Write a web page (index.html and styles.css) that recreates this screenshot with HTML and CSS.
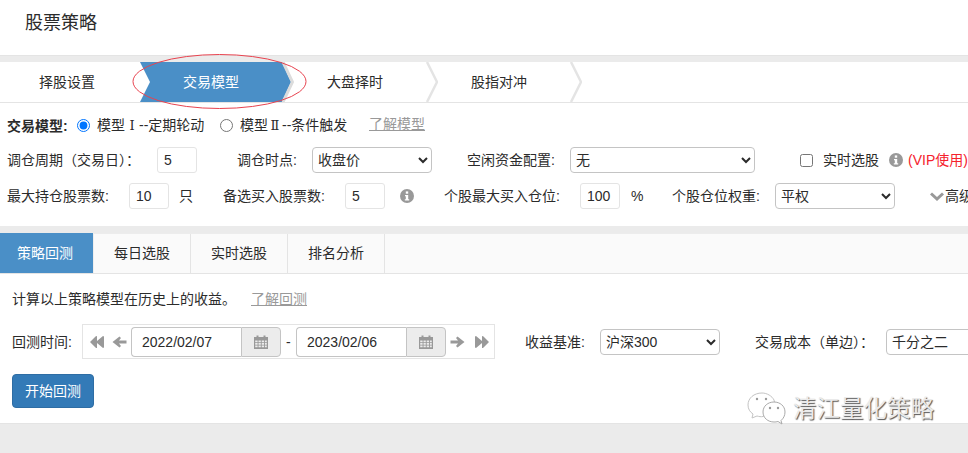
FILE: index.html
```html
<!DOCTYPE html>
<html lang="zh-CN">
<head>
<meta charset="utf-8">
<title>股票策略</title>
<link rel="stylesheet" href="styles.css">
</head>
<body>
<svg class="defs" width="0" height="0">
  <symbol id="info" viewBox="0 0 14 14"><circle cx="7" cy="7" r="7" fill="#999"/><rect x="5.8" y="2.4" width="2.4" height="2.3" fill="#fff"/><path d="M5 6h3.2v4.2H9.2v1.300H4.800v-1.300h1V7.200H5z" fill="#fff"/></symbol>
  <symbol id="back2" viewBox="0 0 14 14"><path d="M7 1v5L13 1q1 0 1 1v10q0 1-1 1L7 8v5q-1 0-1.500-.5L0 7l5.500-5.500Q6 1 7 1z" fill="#999"/></symbol>
  <symbol id="fwd2" viewBox="0 0 14 14"><path d="M7 1v5L1 1q-1 0-1 1v10q0 1 1 1l6-5v5q1 0 1.500-.5L14 7 8.500 1.500Q8 1 7 1z" fill="#999"/></symbol>
  <symbol id="left" viewBox="0 0 14 14"><path d="M7 1.500l1.500 1.500-2 2.500H14v3H6.500l2 2.500L7 12.500 0 7z" fill="#999"/></symbol>
  <symbol id="right" viewBox="0 0 14 14"><path d="M7 1.500L5.500 3l2 2.500H0v3h7.500l-2 2.500L7 12.500 14 7z" fill="#999"/></symbol>
  <symbol id="cal" viewBox="0 0 14 14"><path fill="#999" d="M0 2h2.500V.5h2V2h5V.5h2V2H14v12H0z"/><path fill="#ececec" d="M1.200 5.500h2.400v1.700H1.200zm3.300 0h2.300v1.700H4.500zm3.200 0H10v1.700H7.700zm3.200 0h1.900v1.700h-1.900zM1.200 8h2.400v1.700H1.200zm3.300 0h2.300v1.700H4.500zm3.200 0H10v1.700H7.700zm3.200 0h1.900v1.700h-1.900zM1.200 10.500h2.400v1.700H1.200zm3.300 0h2.300v1.700H4.500zm3.200 0H10v1.700H7.700zm3.200 0h1.900v1.700h-1.900z"/></symbol>
</svg>

<header class="page-title">股票策略</header>
<div class="band"></div>

<nav class="steps">
  <div class="step"><span>择股设置</span></div>
  <div class="step step-active"><svg class="arrow" width="154" height="40" viewBox="0 0 154 40"><path d="M0 0H142l9 20-9 20H0l10-20z" fill="#4a8fc7"/><path d="M143 0l9.500 20L143 40" fill="none" stroke="#dcdcdc" stroke-width="3"/></svg><span>交易模型</span></div>
  <div class="step"><span>大盘择时</span><svg class="chev" width="12" height="40" viewBox="0 0 12 40"><path d="M1 0l10 20L1 40" fill="none" stroke="#e4e4e4" stroke-width="2.500"/></svg></div>
  <div class="step"><span>股指对冲</span><svg class="chev" width="12" height="40" viewBox="0 0 12 40"><path d="M1 0l10 20L1 40" fill="none" stroke="#e4e4e4" stroke-width="2.500"/></svg></div>
</nav>

<section class="config">
  <div class="row row-model">
    <strong class="w-model">交易模型:</strong>
    <label class="radio radio-a"><input type="radio" name="model" checked><span>模型<span class="roman">Ⅰ</span>--定期轮动</span></label>
    <label class="radio radio-b"><input type="radio" name="model"><span>模型<span class="roman">Ⅱ</span>--条件触发</span></label>
    <a class="link link-model">了解模型</a>
  </div>
  <div class="row row-form">
    <span class="w-a">调仓周期（交易日）：</span>
    <input class="num" value="5">
    <span class="w-b">调仓时点:</span>
    <select class="sel sel-s"><option>收盘价</option></select>
    <span class="w-c">空闲资金配置:</span>
    <select class="sel sel-l"><option>无</option></select>
    <input class="check" type="checkbox">
    <span>实时选股</span>
    <svg class="ico ico-vip" width="14" height="14"><use href="#info"/></svg>
    <span class="vip">(VIP使用)</span>
  </div>
  <div class="row row-form row-3">
    <span class="w-d">最大持仓股票数:</span>
    <input class="num" value="10">
    <span class="unit">只</span>
    <span class="w-e">备选买入股票数:</span>
    <input class="num" value="5">
    <svg class="ico ico-buy" width="14" height="14"><use href="#info"/></svg>
    <span class="w-f">个股最大买入仓位:</span>
    <input class="num" value="100">
    <span class="unit unit-pct">%</span>
    <span class="w-g">个股仓位权重:</span>
    <select class="sel sel-s"><option>平权</option></select>
    <svg class="more-ico" width="14" height="10" viewBox="0 0 14 10"><path d="M2 1.500l5 4.500 5-4.500 2 2-7 6.500-7-6.500z" fill="#999"/></svg>
    <span>高级</span>
  </div>
</section>

<div class="band band-2"></div>

<nav class="tabs">
  <a class="tab tab-active">策略回测</a>
  <a class="tab">每日选股</a>
  <a class="tab">实时选股</a>
  <a class="tab">排名分析</a>
</nav>

<section class="panel">
  <p class="intro">计算以上策略模型在历史上的收益。<a class="link link-back">了解回测</a></p>
  <div class="row row-date">
    <span class="w-h">回测时间:</span>
    <div class="range">
      <svg class="nav-ico n1" width="16" height="14"><use href="#back2"/></svg>
      <svg class="nav-ico n2" width="15" height="14"><use href="#left"/></svg>
      <div class="date"><input class="date-in" value="2022/02/07"><span class="addon"><svg width="14" height="14"><use href="#cal"/></svg></span></div>
      <span class="dash">-</span>
      <div class="date"><input class="date-in" value="2023/02/06"><span class="addon"><svg width="14" height="14"><use href="#cal"/></svg></span></div>
      <svg class="nav-ico n3" width="15" height="14"><use href="#right"/></svg>
      <svg class="nav-ico n4" width="16" height="14"><use href="#fwd2"/></svg>
    </div>
    <span class="w-i">收益基准:</span>
    <select class="sel sel-s"><option>沪深300</option></select>
    <span class="w-j">交易成本（单边）：</span>
    <select class="sel sel-s"><option>千分之二</option></select>
  </div>
  <button class="start">开始回测</button>
</section>
<footer class="foot"></footer>

<svg class="ellipse" width="176" height="58" viewBox="0 0 176 58"><ellipse cx="87.500" cy="28.500" rx="86.500" ry="27" fill="none" stroke="#e8434f" stroke-width="1"/></svg>
<div class="mark">
  <svg width="40" height="34" viewBox="0 0 40 34"><g fill="#fff" stroke="#c4c4c4" stroke-width="1"><path d="M15 1C7 1 1 6 1 13c0 4 2 7 5 9l-1 4 5-2c2 .5 4 1 6 .5C20 22 30 14 27 8c-2-4-7-7-12-7z"/><path d="M27 10c-6 0-11 4-11 10s5 10 11 10c1.500 0 2.500 0 4-.5l4 2.500-1-3.500c2.500-2 4-5 4-8.500 0-6-5-10-11-10z" stroke="#aaa"/></g><g fill="#999"><circle cx="10" cy="7" r="1.200"/><circle cx="19" cy="7" r="1.200"/><circle cx="23" cy="16" r="1.200"/><circle cx="31" cy="16" r="1.200"/></g></svg>
  <span>清江量化策略</span>
</div>
</body>
</html>
```
FILE: styles.css
```css
* { box-sizing: border-box; }
html, body { margin: 0; height: 453px; overflow: hidden; }
body {
  position: relative;
  width: 968px;
  background: #fff;
  color: #2b2b2b;
  font: 14px/20px "Liberation Sans", "Noto Sans CJK SC", sans-serif;
}
.defs { position: absolute; }
.page-title { height: 55px; padding: 13px 0 0 25px; font-size: 18px; line-height: 20px; }
.band { height: 7px; background: #ebebeb; border-top: 1px solid #e4e4e4; }
.band-2 { border-top: 0; }

.steps { display: flex; height: 41px; margin-left: -5px; border-bottom: 1px solid #e4e4e4; width: 973px; }
.step { position: relative; flex: none; width: 144px; display: flex; align-items: center; justify-content: center; }
.step span { position: relative; }
.step-active { color: #fff; }
.arrow { position: absolute; left: 1px; top: 0; }
.chev { position: absolute; right: -11px; top: 0; }

.config { height: 123px; padding: 0 0 0 7px; }
.row { display: flex; align-items: center; white-space: nowrap; }
.row > * { flex: none; }
.row-model { height: 45px; }
.w-model { width: 70px; }
.radio { display: flex; align-items: center; }
.radio input { margin: 0 7px 0 0; width: 13px; height: 13px; }
.roman { display: inline-block; width: 14px; text-align: center; font-family: "DejaVu Serif", serif; font-size: 13px; }
.radio-a { width: 143px; }
.radio-b { width: 149px; }
.link { color: #999; text-decoration: underline; }
.link-model { position: relative; top: -2px; }

.row-form { height: 26px; margin-top: -1px; }
.row-3 { margin-top: 10px; }
.num { width: 40px; height: 26px; padding: 0 5px 0 6px; border: 1px solid #e4e4e4; border-radius: 3px; font: inherit; color: inherit; outline: 0; }
.sel { height: 26px; width: 120px; border: 1px solid #c4c4c4; border-radius: 4px; background: #fff; font: inherit; color: inherit; padding: 0 0 0 1px; }
.sel-l { width: 185px; }
.w-a { width: 150px; }
.w-b { margin-left: 40px; width: 75px; }
.w-c { margin-left: 35px; width: 103px; }
.check { margin: 0 10px 0 45px; width: 13px; height: 13px; }
.ico-vip { margin: 0 5px 0 10px; }
.vip { color: #f5222d; }
.w-d { width: 122px; }
.unit { margin-left: 10px; width: 14px; }
.w-e { margin-left: 30px; width: 122px; }
.ico-buy { margin-left: 15px; }
.w-f { margin-left: 30px; width: 136px; }
.unit-pct { margin-left: 11px; width: 12px; }
.w-g { margin-left: 29px; width: 103px; }
.more-ico { margin-left: 35px; margin-right: 1px; }

.tabs { display: flex; height: 41px; background: #fafafa; border-top: 1px solid #ececec; border-bottom: 1px solid #e4e4e4; }
.tab { height: 39px; padding: 9px 20px 0; width: 97px; text-align: center; border-right: 1px solid #e4e4e4; }
.tab-active { width: 94px; padding-left: 17px; padding-right: 20px; margin-top: -1px; height: 40px; padding-top: 10px; background: #4a8fc7; color: #fff; border-right: 1px solid #eee; }

.panel { height: 149px; padding: 0 0 0 12px; }
.intro { margin: 0; padding-top: 15px; height: 50px; }
.link-back { margin-left: 15px; }
.row-date { height: 35px; }
.w-h { width: 70px; }
.range { display: flex; align-items: center; width: 413px; height: 35px; border: 1px solid #e4e4e4; }
.n1 { margin-left: 6px; }
.n2 { margin-left: 7px; margin-right: 4px; }
.nav-ico { flex: none; }
.date { flex: none; display: flex; width: 150px; height: 30px; }
.date-in { width: 110px; height: 30px; padding: 0 10px; border: 1px solid #c4c4c4; border-right: 0; border-radius: 4px 0 0 4px; font: inherit; color: inherit; outline: 0; }
.addon { width: 40px; display: flex; align-items: center; justify-content: center; background: #ececec; border: 1px solid #c4c4c4; border-radius: 0 4px 4px 0; }
.dash { flex: none; width: 15px; padding-left: 5px; }
.n3 { margin-left: 4px; }
.n4 { margin-left: 9px; }
.w-i { margin-left: 30px; width: 75px; }
.w-j { margin-left: 35px; width: 131px; }
.start { display: block; margin-top: 15px; width: 82px; height: 34px; padding: 0; background: #337ab7; border: 1px solid #2e6da4; border-radius: 4px; color: #fff; font: inherit; }
.foot { height: 30px; background: #ebebeb; border-top: 1px solid #e4e4e4; }

.ellipse { position: absolute; left: 132px; top: 53px; pointer-events: none; }
.mark { position: absolute; left: 747px; top: 392px; display: flex; align-items: center; gap: 6px; color: #eaeaea; font-size: 23.500px; line-height: 34px; text-shadow: 1px 1px 1px #555; }
```
